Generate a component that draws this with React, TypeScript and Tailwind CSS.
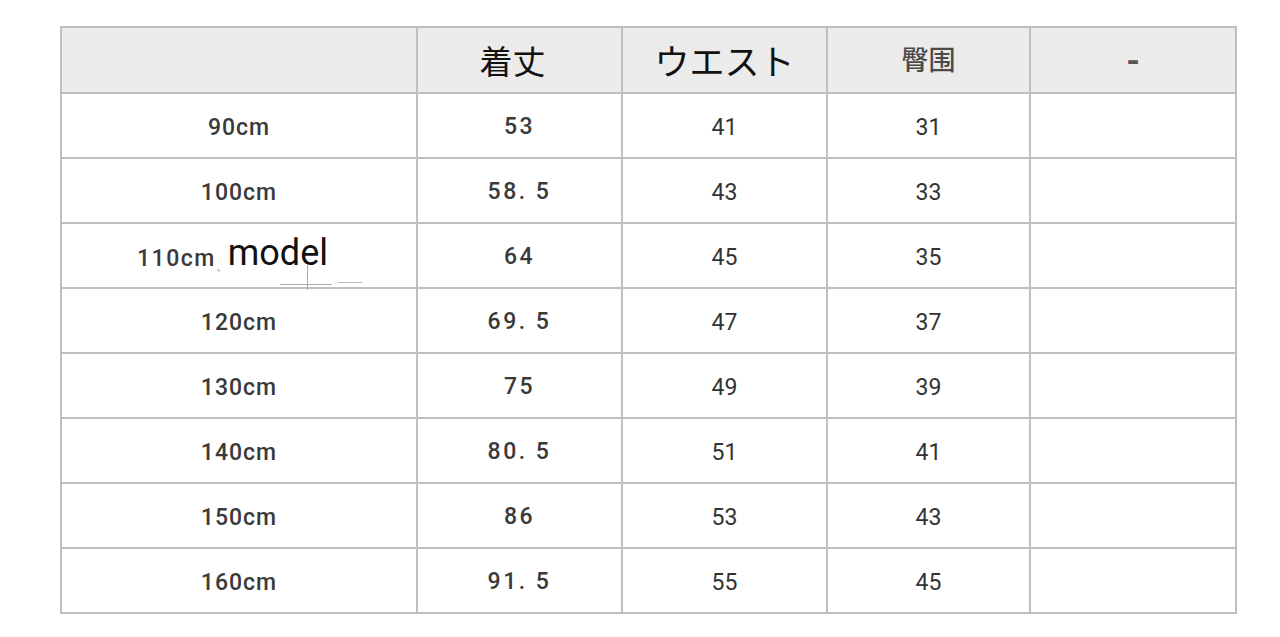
const rows = [
  { size: "90cm", length: "53", waist: "41", hip: "31" },
  { size: "100cm", length: "58. 5", waist: "43", hip: "33" },
  { size: "110cm", length: "64", waist: "45", hip: "35" },
  { size: "120cm", length: "69. 5", waist: "47", hip: "37" },
  { size: "130cm", length: "75", waist: "49", hip: "39" },
  { size: "140cm", length: "80. 5", waist: "51", hip: "41" },
  { size: "150cm", length: "86", waist: "53", hip: "43" },
  { size: "160cm", length: "91. 5", waist: "55", hip: "45" },
];

const gothic = "font-['Roboto','Noto_Sans_CJK_JP',sans-serif] font-medium";
const sans = "font-['Roboto','Noto_Sans_CJK_JP',sans-serif]";
const cell = "border-2 border-[#bfbfbf]";

export default function App() {
  return (
    <div className="min-h-[637px] w-full bg-white pl-[60px] pt-[26px]">
      <table className="table-fixed border-collapse">
        <colgroup>
          <col className="w-[356px]" />
          <col className="w-[205px]" />
          <col className="w-[205px]" />
          <col className="w-[203px]" />
          <col className="w-[206px]" />
        </colgroup>
        <thead>
          <tr className="h-[66px] bg-[#ebebeb]">
            <th className={cell}></th>
            <th className={`${cell} pt-[6px] pr-[14px] text-[33px] font-normal text-[#111] ${sans}`}>着丈</th>
            <th className={`${cell} pt-[8px] text-[35px] font-normal text-[#111] ${sans}`}>ウエスト</th>
            <th className={`${cell} pt-[2px] text-[27px] font-medium text-[#4a4a4a] ${sans}`}>臀围</th>
            <th className={`${cell} pt-[2px] text-[36px] font-semibold text-[#555] ${sans}`}>-</th>
          </tr>
        </thead>
        <tbody>
          {rows.map((r) => (
            <tr key={r.size} className="h-[65px]">
              <td className={`${cell} relative p-0 pt-[6px] text-center`}>
                {r.size === "110cm" ? (
                  <>
                    <div className="flex items-end pl-[75px]">
                      <span className={`text-[23px] tracking-[1.5px] text-[#3a3a3a] ${gothic}`}>110cm</span>
                      <span className="mb-[2px] text-[12px] text-[#666]">、</span>
                      <span className={`relative -top-[6px] text-[36px] leading-none text-[#111] ${sans}`}>model</span>
                    </div>
                    <div className="absolute left-[218px] top-[60px] h-px w-[52px] bg-[#aaa]" />
                    <div className="absolute left-[276px] top-[58px] h-px w-[24px] bg-[#bbb]" />
                    <div className="absolute left-[245px] top-[40px] h-[26px] w-px bg-[#aaa]" />
                  </>
                ) : (
                  <span className={`text-[23px] tracking-[1px] text-[#3a3a3a] ${gothic}`}>{r.size}</span>
                )}
              </td>
              <td className={`${cell} pt-[4px] text-center text-[23px] tracking-[2.5px] text-[#3a3a3a] ${gothic}`}>{r.length}</td>
              <td className={`${cell} pt-[6px] text-center text-[23px] text-[#333] ${sans}`}>{r.waist}</td>
              <td className={`${cell} pt-[6px] text-center text-[23px] text-[#333] ${sans}`}>{r.hip}</td>
              <td className={cell}></td>
            </tr>
          ))}
        </tbody>
      </table>
    </div>
  );
}
